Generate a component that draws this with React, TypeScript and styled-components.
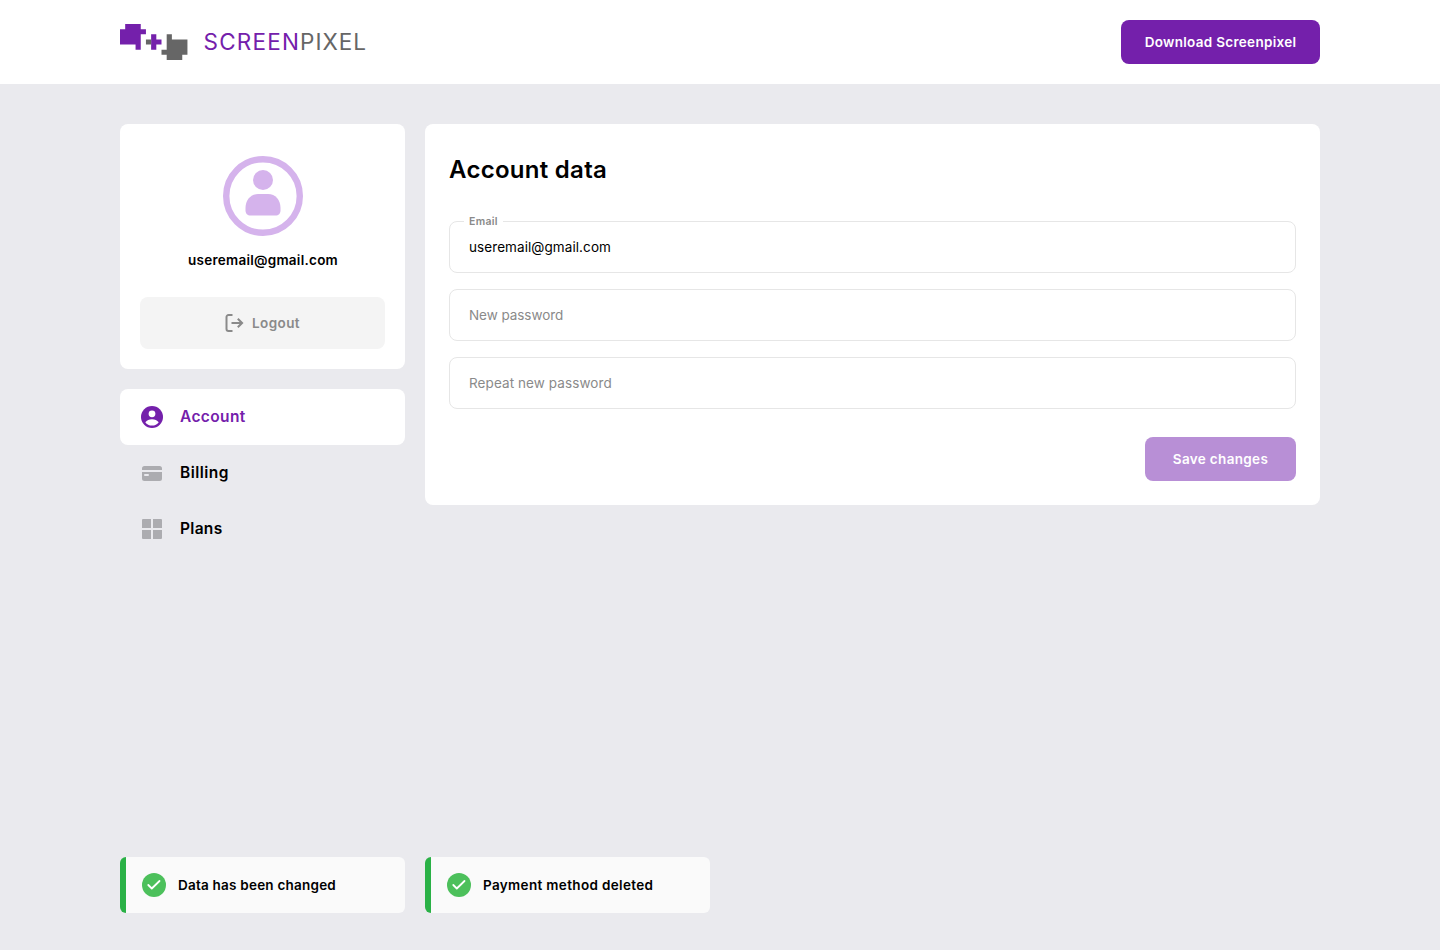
import React from "react";
import styled, { createGlobalStyle } from "styled-components";

const GlobalStyle = createGlobalStyle`
  * { box-sizing: border-box; }
  body {
    margin: 0;
    background: #eaeaee;
    color: #000;
    font-family: Inter, Roboto, sans-serif;
    font-size: 13.5px;
  }
  button { font-family: inherit; border: 0; margin: 0; }
  h1, p { margin: 0; }
`;

const Page = styled.div`
  min-height: 950px;
  display: flex;
  flex-direction: column;
`;

const Header = styled.header`
  height: 84px;
  background: #fff;
`;

const Container = styled.div`
  width: 1200px;
  margin: 0 auto;
`;

const HeaderRow = styled(Container)`
  height: 100%;
  display: flex;
  align-items: center;
  justify-content: space-between;
`;

const Brand = styled.div`
  display: flex;
  align-items: center;
  gap: 14.5px;
`;

const Wordmark = styled.span`
  font-size: 22.5px;
  line-height: 36px;
  letter-spacing: 1px;
  color: #666;
  white-space: nowrap;
`;

const WordAccent = styled.span`
  color: #7420ab;
  letter-spacing: 1.2px;
`;

const Button = styled.button<{ $width: number; $muted?: boolean }>`
  display: flex;
  align-items: center;
  justify-content: center;
  width: ${(p) => p.$width}px;
  height: 44px;
  padding: 0;
  border-radius: 8px;
  background: ${(p) => (p.$muted ? "#b88fd6" : "#7420ab")};
  color: #fff;
  font-size: 13.5px;
  font-weight: 600;
  white-space: nowrap;
`;

const Label = styled.span<{ $spacing?: number }>`
  letter-spacing: ${(p) => p.$spacing ?? 0}px;
  white-space: nowrap;
`;

const Main = styled(Container)`
  flex: 1;
  display: flex;
  align-items: flex-start;
  gap: 20px;
  padding-top: 40px;
`;

const Sidebar = styled.aside`
  width: 285px;
  display: flex;
  flex-direction: column;
  gap: 20px;
`;

const Card = styled.section`
  background: #fff;
  border-radius: 8px;
`;

const ProfileCard = styled(Card)`
  height: 245px;
  padding: 32px 20px 20px;
  display: flex;
  flex-direction: column;
  align-items: center;
`;

const ProfileEmail = styled.p`
  margin-top: 14px;
  padding-left: 1px;
  font-weight: 600;
  line-height: 20px;
`;

const LogoutButton = styled.button`
  width: 100%;
  height: 52px;
  margin-top: auto;
  padding: 0;
  display: flex;
  align-items: center;
  justify-content: center;
  gap: 8px;
  border-radius: 8px;
  background: #f4f4f4;
  color: #8a8a8a;
  font-size: 13.5px;
  font-weight: 600;
`;

const Nav = styled.nav`
  display: flex;
  flex-direction: column;
`;

const NavItem = styled.a<{ $active?: boolean }>`
  height: 56px;
  padding-left: 20px;
  display: flex;
  align-items: center;
  gap: 16px;
  border-radius: 8px;
  background: ${(p) => (p.$active ? "#fff" : "transparent")};
  color: ${(p) => (p.$active ? "#7420ab" : "#000")};
  font-size: 15.5px;
  font-weight: 600;
`;

const NavLabel = styled(Label)`
  padding-bottom: 2px;
`;

const AccountCard = styled(Card)`
  flex: 1;
  height: 381px;
  padding: 30px 24px 24px;
  display: flex;
  flex-direction: column;
`;

const Title = styled.h1`
  font-size: 24px;
  font-weight: 640;
  line-height: 32px;
`;

const Fields = styled.div`
  margin-top: 35px;
  display: flex;
  flex-direction: column;
  gap: 16px;
`;

const Field = styled.div<{ $filled?: boolean }>`
  position: relative;
  height: 52px;
  padding-left: 19px;
  display: flex;
  align-items: center;
  border: 1px solid #e6e6e6;
  border-radius: 8px;
  color: ${(p) => (p.$filled ? "#000" : "#8a8a8a")};
`;

const FieldLabel = styled.span`
  position: absolute;
  top: -7px;
  left: 14px;
  padding: 0 5px;
  background: #fff;
  color: #8a8a8a;
  font-size: 10.5px;
  font-weight: 600;
  letter-spacing: 0.3px;
  line-height: 14px;
`;

const Actions = styled.div`
  margin-top: 28px;
  display: flex;
  justify-content: flex-end;
`;

const Toasts = styled(Container)`
  display: flex;
  gap: 20px;
  padding-bottom: 37px;
`;

const Toast = styled.div`
  width: 285px;
  height: 56px;
  padding-left: 16px;
  display: flex;
  align-items: center;
  gap: 12px;
  border-left: 6px solid #2ab146;
  border-radius: 6px;
  background: #fafafa;
  font-weight: 600;
`;

const LogoMark = () => (
  <svg width="69" height="36" viewBox="0 0 13.3 7" preserveAspectRatio="none">
    <path fill="#7420ab" d="M1 0h3v1h1v1H4v3H3V4H0V1h1zM6 2h1v1h1v1H7v1H6z" />
    <path fill="#666" d="M5 3h1v1H5zM9 2h1v1h3v3h-1v1H9V6H8V5h1z" />
  </svg>
);

const Avatar = () => (
  <svg width="80" height="80" viewBox="0 0 80 80" fill="#d5b3ec">
    <circle cx="40" cy="40" r="36.8" fill="none" stroke="#d5b3ec" strokeWidth="6.4" />
    <circle cx="40" cy="24" r="10" />
    <path d="M35 38h10c7.5 0 12.5 6 12.5 14v2.500c0 3-2 5-5 5h-25c-3 0-5-2-5-5V52c0-8 5-14 12.500-14z" />
  </svg>
);

const LogoutIcon = () => (
  <svg width="19" height="18" viewBox="0 0 19 18" fill="none" stroke="currentColor" strokeWidth="2">
    <path d="M7.500 1H3.500a2 2 0 0 0-2 2v12a2 2 0 0 0 2 2h4M6.500 9H17M12.800 4.700 17.100 9l-4.300 4.300" />
  </svg>
);

const AccountIcon = () => (
  <svg width="24" height="24" viewBox="0 0 24 24">
    <circle cx="12" cy="12" r="11" fill="#7420ab" />
    <circle cx="12" cy="8.800" r="3.400" fill="#fff" />
    <path fill="#fff" d="M5.300 17.200C6.800 15.300 9.300 14.300 12 14.300s5.200 1 6.700 2.900C17.200 19.400 14.800 20.600 12 20.600s-5.200-1.200-6.700-3.400z" />
  </svg>
);

const BillingIcon = () => (
  <svg width="24" height="24" viewBox="0 0 24 24" fill="#acacb0">
    <path d="M2 9V7.500A2.500 2.500 0 0 1 4.500 5h15A2.500 2.500 0 0 1 22 7.500V9z" />
    <path fillRule="evenodd" d="M2 11h20v6.500a2.500 2.500 0 0 1-2.500 2.500h-15A2.500 2.500 0 0 1 2 17.500zM5 13a1 1 0 0 0 0 2h3a1 1 0 0 0 0-2z" />
  </svg>
);

const PlansIcon = () => (
  <svg width="24" height="24" viewBox="0 0 24 24" fill="#acacb0">
    <path d="M3 2h8v9H2V3a1 1 0 0 1 1-1zM13 2h8a1 1 0 0 1 1 1v8h-9zM2 13h9v9H3a1 1 0 0 1-1-1zM13 13h9v8a1 1 0 0 1-1 1h-8z" />
  </svg>
);

const CheckIcon = () => (
  <svg width="24" height="24" viewBox="0 0 24 24" fill="none">
    <circle cx="12" cy="12" r="12" fill="#4cc05b" />
    <path d="m6.300 12 3.500 3.500 7.700-7.500" stroke="#fff" strokeWidth="1.800" strokeLinecap="round" strokeLinejoin="round" />
  </svg>
);

export default function App() {
  return (
    <Page>
      <GlobalStyle />
      <Header>
        <HeaderRow>
          <Brand>
            <LogoMark />
            <Wordmark>
              <WordAccent>SCREEN</WordAccent>PIXEL
            </Wordmark>
          </Brand>
          <Button $width={199}>
            <Label $spacing={0.3}>Download Screenpixel</Label>
          </Button>
        </HeaderRow>
      </Header>
      <Main>
        <Sidebar>
          <ProfileCard>
            <Avatar />
            <ProfileEmail>
              <Label $spacing={0.26}>useremail@gmail.com</Label>
            </ProfileEmail>
            <LogoutButton>
              <LogoutIcon />
              <Label $spacing={0.4}>Logout</Label>
            </LogoutButton>
          </ProfileCard>
          <Nav>
            <NavItem $active>
              <AccountIcon />
              <NavLabel $spacing={0.38}>Account</NavLabel>
            </NavItem>
            <NavItem>
              <BillingIcon />
              <NavLabel $spacing={0.45}>Billing</NavLabel>
            </NavItem>
            <NavItem>
              <PlansIcon />
              <NavLabel $spacing={0.3}>Plans</NavLabel>
            </NavItem>
          </Nav>
        </Sidebar>
        <AccountCard>
          <Title>
            <Label $spacing={0.28}>Account data</Label>
          </Title>
          <Fields>
            <Field $filled>
              <FieldLabel>Email</FieldLabel>
              <Label $spacing={0.08}>useremail@gmail.com</Label>
            </Field>
            <Field>
              <Label $spacing={-0.06}>New password</Label>
            </Field>
            <Field>
              <Label $spacing={0.09}>Repeat new password</Label>
            </Field>
          </Fields>
          <Actions>
            <Button $width={151} $muted>
              <Label $spacing={0.33}>Save changes</Label>
            </Button>
          </Actions>
        </AccountCard>
      </Main>
      <Toasts>
        <Toast>
          <CheckIcon />
          <Label $spacing={0.22}>Data has been changed</Label>
        </Toast>
        <Toast>
          <CheckIcon />
          <Label $spacing={0.34}>Payment method deleted</Label>
        </Toast>
      </Toasts>
    </Page>
  );
}
